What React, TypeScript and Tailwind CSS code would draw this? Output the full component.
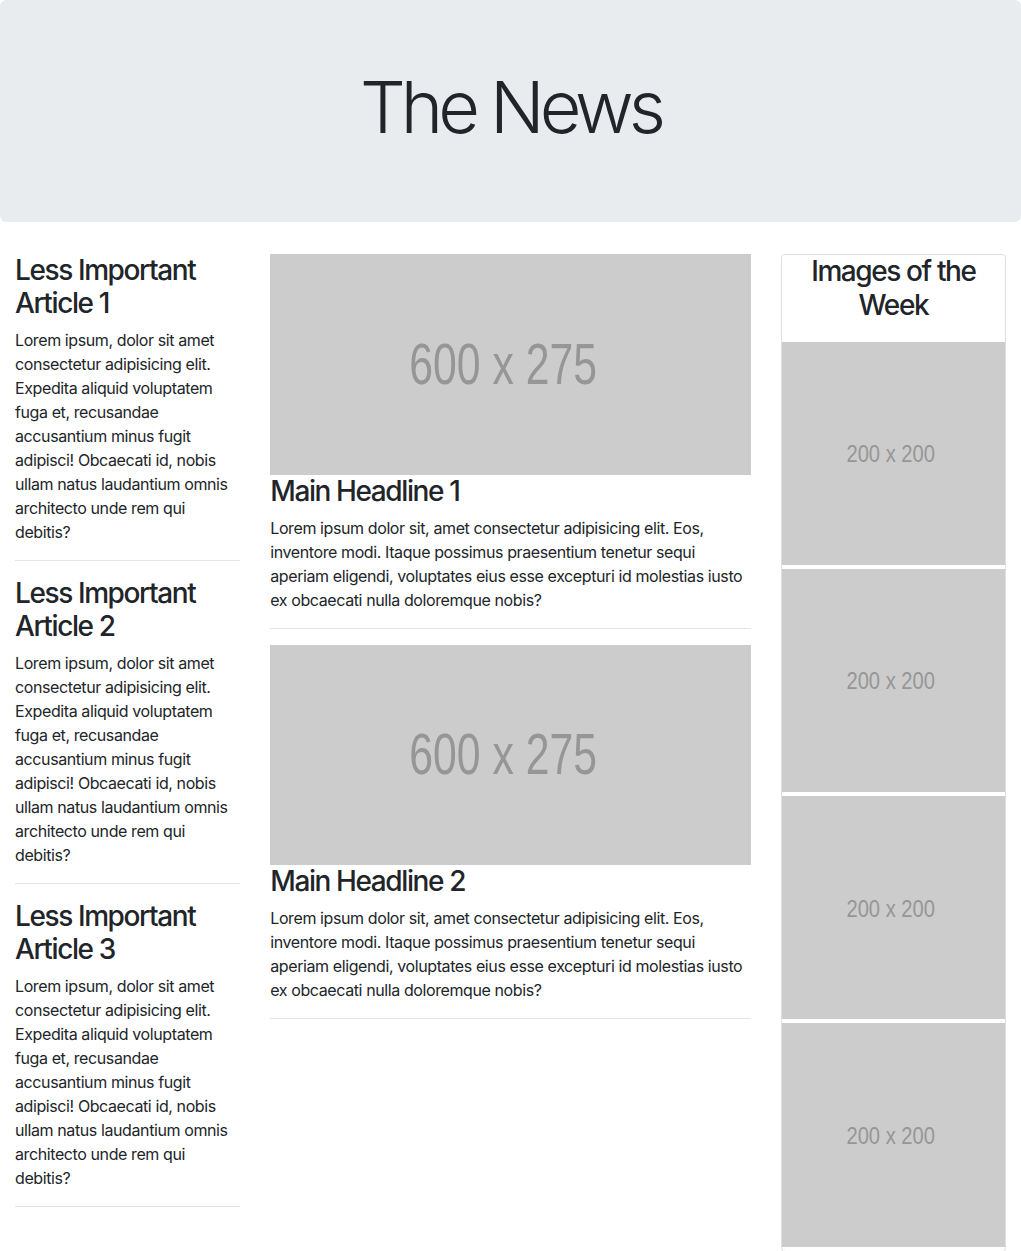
const sideText =
  'Lorem ipsum, dolor sit amet consectetur adipisicing elit. Expedita aliquid voluptatem fuga et, recusandae accusantium minus fugit adipisci! Obcaecati id, nobis ullam natus laudantium omnis architecto unde rem qui debitis?'

const mainText =
  'Lorem ipsum dolor sit, amet consectetur adipisicing elit. Eos, inventore modi. Itaque possimus praesentium tenetur sequi aperiam eligendi, voluptates eius esse excepturi id molestias iusto ex obcaecati nulla doloremque nobis?'

function Placeholder({ label, big }: { label: string; big?: boolean }) {
  return (
    <div
      className={
        big
          ? 'w-full aspect-[600/275] bg-[#cccccc] flex items-center justify-center pr-[14px]'
          : 'w-full aspect-square bg-[#cccccc] flex items-center justify-center pr-[6px] mb-1'
      }
    >
      <span
        className={
          big
            ? 'text-[57px] text-[#969696] scale-x-[0.75] whitespace-nowrap leading-none'
            : 'text-[24px] text-[#969696] scale-x-[0.84] whitespace-nowrap leading-none mt-[2px]'
        }
        style={{ fontFamily: '"Liberation Sans", Arial, sans-serif' }}
      >
        {label}
      </span>
    </div>
  )
}

function SideArticle({ n }: { n: number }) {
  return (
    <div>
      <h3 className="text-[28px] font-medium leading-[33px] mb-2 tracking-[-0.05em]">
        Less Important Article {n}
      </h3>
      <p className="text-base leading-6 mb-4 tracking-[-0.025em]">{sideText}</p>
      <hr className="border-0 border-t border-[#e5e5e5] mb-4" />
    </div>
  )
}

function MainArticle({ n }: { n: number }) {
  return (
    <div>
      <Placeholder label="600 x 275" big />
      <h3 className="text-[28px] font-medium leading-[33px] mb-2 tracking-[-0.05em]">
        Main Headline {n}
      </h3>
      <p className="text-base leading-6 mb-4 tracking-[-0.025em]">{mainText}</p>
      <hr className="border-0 border-t border-[#e5e5e5] mb-4" />
    </div>
  )
}

export default function App() {
  return (
    <div
      className="min-h-screen bg-white text-[#212529]"
      style={{ fontFamily: 'Inter, "Noto Sans", sans-serif' }}
    >
      <div className="bg-[#e9ecef] rounded-md py-16 px-8 mb-8">
        <h1 className="text-[72px] font-light leading-[1.2] mb-2 text-center tracking-[-0.07em]">
          The News
        </h1>
      </div>

      <div className="grid grid-cols-[1fr_2fr_1fr]">
        <div className="px-[15px]">
          {[1, 2, 3].map(n => (
            <SideArticle key={n} n={n} />
          ))}
        </div>

        <div className="px-[15px]">
          {[1, 2].map(n => (
            <MainArticle key={n} n={n} />
          ))}
        </div>

        <div className="px-[15px]">
          <div className="border border-[#dfdfdf] rounded">
            <h3 className="text-[28px] font-medium leading-[1.2] mb-[19px] text-center tracking-[-0.05em]">
              Images of the Week
            </h3>
            {[1, 2, 3, 4].map(n => (
              <Placeholder key={n} label="200 x 200" />
            ))}
          </div>
        </div>
      </div>
    </div>
  )
}
